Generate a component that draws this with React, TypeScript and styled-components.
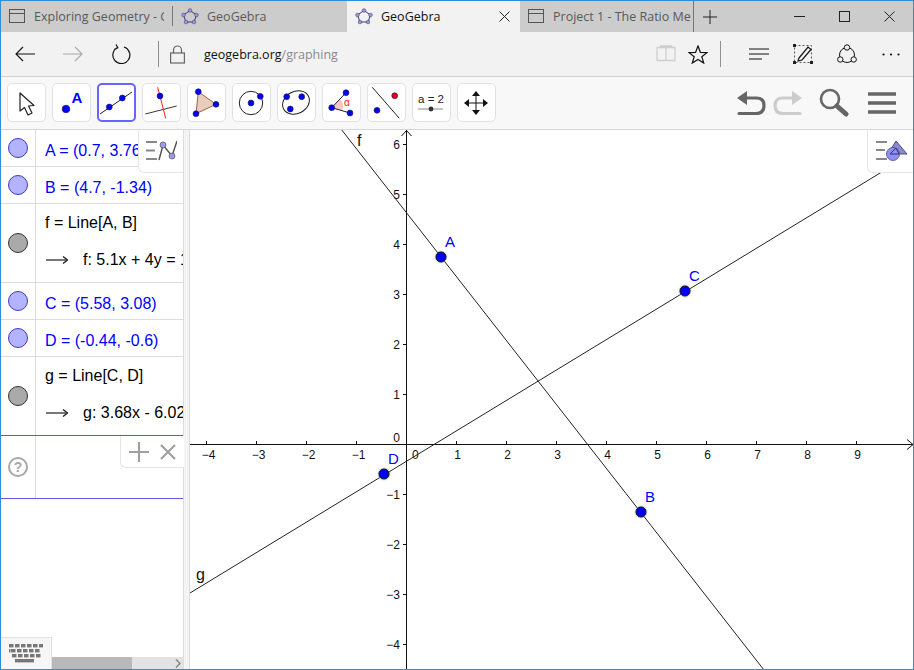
import React from "react";
import styled, { createGlobalStyle } from "styled-components";

const Global = createGlobalStyle`
  html, body { margin: 0; padding: 0; background: #fff; overflow: hidden; }
  * { box-sizing: border-box; }
  svg { flex: none; display: block; }
`;

const Frame = styled.div`
  position: relative;
  width: 914px;
  height: 670px;
  display: flex;
  flex-direction: column;
  border: 1px solid #2b8fdc;
  background: #fff;
  overflow: hidden;
`;

const TabBar = styled.div`
  height: 31px;
  flex: none;
  display: flex;
  background: #cccccc;
  font: 12.5px "Open Sans", "Noto Sans", sans-serif;
`;

const Tab = styled.div<{ $active?: boolean; $w: number; $sep?: "short" | "full" }>`
  position: relative;
  width: ${(p) => p.$w}px;
  flex: none;
  display: flex;
  align-items: center;
  padding-left: 8px;
  gap: 8px;
  color: ${(p) => (p.$active ? "#111" : "#5a5a5a")};
  background: ${(p) => (p.$active ? "#f2f2f2" : "transparent")};
  border-right: ${(p) => (p.$sep === "full" ? "1px solid #777" : "none")};
  &::after {
    content: "";
    display: ${(p) => (p.$sep === "short" ? "block" : "none")};
    position: absolute;
    right: 0;
    top: 5px;
    height: 20px;
    border-right: 1px solid #777;
  }
`;

const TabTitle = styled.span<{ $w: number }>`
  width: ${(p) => p.$w}px;
  overflow: hidden;
  white-space: nowrap;
`;

const TabClose = styled.span`
  margin-left: auto;
  margin-right: 10px;
  display: flex;
`;

const WindowButtons = styled.div`
  margin-left: auto;
  padding-right: 1px;
  display: flex;
  align-items: center;
`;

const WindowButton = styled.div`
  width: 45px;
  height: 31px;
  display: flex;
  align-items: center;
  justify-content: center;
`;

const NewTab = styled.div`
  width: 32px;
  display: flex;
  align-items: center;
  justify-content: center;
`;

const AddressBar = styled.div`
  height: 45px;
  flex: none;
  display: flex;
  align-items: center;
  background: #f2f2f2;
  border-bottom: 1px solid #cfcfcf;
`;

const NavSlot = styled.div<{ $w?: number }>`
  width: ${(p) => p.$w ?? 48}px;
  height: 44px;
  flex: none;
  display: flex;
  align-items: center;
  justify-content: center;
`;

const BarSep = styled.div<{ $ml: number; $mr?: number }>`
  width: 1px;
  height: 26px;
  flex: none;
  background: #8f8f8f;
  margin-left: ${(p) => p.$ml}px;
  margin-right: ${(p) => p.$mr ?? 0}px;
`;

const Url = styled.div`
  margin-left: 9px;
  font: 12.5px "Open Sans", "Noto Sans", sans-serif;
  color: #111;
  span { color: #8a8a8a; }
`;

const RightNav = styled.div`
  margin-left: auto;
  display: flex;
  align-items: center;
`;

const ToolBar = styled.div`
  height: 53px;
  flex: none;
  display: flex;
  align-items: center;
  padding-left: 6px;
  padding-bottom: 1px;
  gap: 6px;
  background: #f8f8f8;
  border-bottom: 1px solid #d6d6d6;
`;

const ToolButton = styled.div<{ $active?: boolean }>`
  width: 39px;
  height: 39px;
  flex: none;
  background: #fff;
  border: ${(p) => (p.$active ? "2px solid #6666ff" : "1px solid #e2e2e2")};
  border-radius: 5px;
  display: flex;
  align-items: center;
  justify-content: center;
  svg { margin: ${(p) => (p.$active ? "-1px" : "0")}; }
`;

const ToolActions = styled.div`
  margin-left: auto;
  margin-right: 17px;
  display: flex;
  align-items: center;
`;

const ActionIcon = styled.div<{ $ml?: number }>`
  margin-left: ${(p) => p.$ml ?? 0}px;
  display: flex;
`;

const Main = styled.div`
  flex: 1;
  min-height: 0;
  display: flex;
`;

const AlgebraPanel = styled.div`
  width: 183px;
  flex: none;
  display: flex;
  flex-direction: column;
  border-right: 1px solid #dcdcdc;
  font: 16px "Liberation Sans", Arial, sans-serif;
`;

const AlgebraList = styled.div`
  flex: 1;
  min-height: 0;
  overflow: hidden;
`;

const Row = styled.div<{ $h: number; $blueBottom?: boolean }>`
  height: ${(p) => p.$h}px;
  display: flex;
  border-bottom: 1px solid ${(p) => (p.$blueBottom ? "#5b5be0" : "#dcdcdc")};
`;

const MarbleCell = styled.div`
  width: 35px;
  flex: none;
  display: flex;
  align-items: center;
  justify-content: center;
  border-right: 1px solid #dcdcdc;
`;

const Marble = styled.div<{ $on?: boolean }>`
  width: 20px;
  height: 20px;
  border-radius: 50%;
  background: ${(p) => (p.$on ? "#b3b3ff" : "#aaaaaa")};
  border: 1px solid ${(p) => (p.$on ? "#3a3ac8" : "#333")};
`;

const Help = styled.div`
  width: 20px;
  height: 20px;
  border-radius: 50%;
  border: 2px solid #a8a8a8;
  color: #a8a8a8;
  font: bold 14px/16px "Liberation Sans", Arial, sans-serif;
  text-align: center;
`;

const RowBody = styled.div`
  flex: 1;
  min-width: 0;
  padding-left: 9px;
  display: flex;
  flex-direction: column;
  justify-content: center;
  overflow: hidden;
  white-space: nowrap;
`;

const PointText = styled.div`
  color: #0000ff;
  line-height: 18px;
  padding-top: 5px;
`;

const Definition = styled.div`
  color: #000;
  line-height: 18px;
  margin-bottom: 19px;
`;

const Output = styled.div`
  display: flex;
  align-items: center;
  gap: 15px;
  color: #000;
  line-height: 18px;
  padding-left: 1px;
  margin-bottom: 4px;
`;

const ScrollRow = styled.div`
  height: 12px;
  flex: none;
  margin-left: 50px;
  display: flex;
  align-items: center;
  background: #e3e3e3;
`;

const ScrollThumb = styled.div`
  width: 81px;
  height: 12px;
  background: #b9b9b9;
`;

const ScrollChevron = styled.div`
  margin-left: auto;
  margin-right: 2px;
  display: flex;
`;

const Divider = styled.div`
  width: 6px;
  flex: none;
  background: #f4f4f4;
  border-right: 1px solid #dcdcdc;
`;

const GraphView = styled.div`
  flex: 1;
  min-width: 0;
`;

const Corner = styled.div<{ $w: number; $h: number }>`
  position: absolute;
  width: ${(p) => p.$w}px;
  height: ${(p) => p.$h}px;
  background: #fff;
  border: 1px solid #e6e6e6;
  border-top: none;
  border-right: none;
  border-bottom-left-radius: 6px;
  display: flex;
  align-items: center;
  justify-content: center;
`;

const AlgebraStyle = styled(Corner)`
  left: 137px;
  top: 129px;
`;

const GraphStyle = styled(Corner)`
  right: 0;
  top: 129px;
`;

const InputActions = styled(Corner)`
  left: 119px;
  top: 435px;
  gap: 11px;
`;

const KeyboardButton = styled.div`
  position: absolute;
  left: 0;
  bottom: 0;
  width: 51px;
  height: 32px;
  background: #f6f6f6;
  border: 1px solid #e2e2e2;
  border-left: none;
  border-bottom: none;
  display: flex;
  align-items: center;
  justify-content: center;
`;

const Pt = ({ x, y, r = 2.9, c = "#0000ff" }: { x: number; y: number; r?: number; c?: string }) => (
  <circle cx={x} cy={y} r={r} fill={c} stroke="#1a1a60" strokeWidth={0.7} />
);

const Ic = ({ children }: { children: React.ReactNode }) => (
  <svg width={37} height={37} viewBox="1 1 37 37">{children}</svg>
);

const tools: React.ReactNode[] = [
  <Ic><path d="M13 10 V28 L17.5 24.5 L21 32 L25 30 L21.5 23 L27 22.5 Z" fill="#fff" stroke="#222" strokeWidth="1.2" strokeLinejoin="round" /></Ic>,
  <Ic><Pt x={14} y={26} r={3.8} /><text x={19.5} y={20} fontFamily="Liberation Sans" fontWeight="bold" fontSize="15" fill="#0000ff">A</text></Ic>,
  <Ic><line x1={3} y1={31} x2={35} y2={9} stroke="#222" strokeWidth="1" /><Pt x={12.3} y={24} /><Pt x={25.3} y={15} /></Ic>,
  <Ic><line x1={3.3} y1={31} x2={34.7} y2={23} stroke="#433" strokeWidth="1" /><line x1={15.7} y1={4.3} x2={23.7} y2={35.3} stroke="#f02020" strokeWidth="1" /><Pt x={18} y={13} /></Ic>,
  <Ic><polygon points="11.3,8.7 29,21.3 9,30.7" fill="#e8cdbd" stroke="#a0603c" strokeWidth="1" /><Pt x={11.3} y={8.7} /><Pt x={29} y={21.3} /><Pt x={9} y={30.7} /></Ic>,
  <Ic><circle cx={19} cy={20} r={11.7} fill="none" stroke="#222" strokeWidth="1" /><Pt x={19} y={20} /><Pt x={28.3} y={13.3} /></Ic>,
  <Ic><ellipse cx={19} cy={19.5} rx={14} ry={11} transform="rotate(-28 19 19.5)" fill="none" stroke="#222" strokeWidth="1" /><Pt x={9.7} y={13.7} /><Pt x={24.7} y={13.7} /><Pt x={13.3} y={26} /></Ic>,
  <Ic><path d="M9.7 24.7 L18 16 A11 11 0 0 1 20.5 27.5 Z" fill="#f8c8c8" /><path d="M24 9.7 L9.7 24.7 L28 30" fill="none" stroke="#222" strokeWidth="1" /><Pt x={9.7} y={24.7} /><Pt x={24} y={9.7} /><Pt x={28} y={30} /><text x={22} y={23} fontFamily="Liberation Sans" fontSize="10" fill="#f02020">α</text></Ic>,
  <Ic><line x1={5.3} y1={4.3} x2={32.3} y2={35.3} stroke="#222" strokeWidth="1" /><Pt x={27.7} y={12.7} c="#f00000" /><Pt x={10} y={27.3} /></Ic>,
  <Ic><text x={19} y={20} textAnchor="middle" fontFamily="Liberation Sans" fontSize="11.5" fill="#222">a = 2</text><line x1={6} y1={26} x2={31} y2={26} stroke="#888" strokeWidth="1" /><circle cx={19} cy={26} r={2.4} fill="#333" /></Ic>,
  <Ic>
    <path d="M19 10 V30 M9 20 H29" stroke="#111" strokeWidth="1" />
    <path d="M19 8 L23 13 H15 Z M19 32 L15 27 H23 Z M7 20 L12 16 V24 Z M31 20 L26 16 V24 Z" fill="#111" />
  </Ic>,
];

const S = ({ w, h, children }: { w: number; h: number; children: React.ReactNode }) => (
  <svg width={w} height={h} viewBox={`0 0 ${w} ${h}`} fill="none">{children}</svg>
);

const PageIcon = () => (
  <S w={17} h={15}><rect x=".5" y=".5" width="15" height="13" stroke="#555" /><line x1="1" y1="4.5" x2="15" y2="4.5" stroke="#555" /></S>
);

const GeoIcon = () => (
  <S w={18} h={17}>
    <polygon points="9,2.5 15.5,7 13,14 5,14 2.5,7" stroke="#3a3a5a" strokeWidth="1" />
    {[[9, 2.5], [15.5, 7], [13, 14], [5, 14], [2.5, 7]].map(([x, y]) => (
      <circle key={x} cx={x} cy={y} r="1.8" fill="#9a9ae8" stroke="#44447a" strokeWidth=".6" />
    ))}
  </S>
);

const Cross = ({ s = 11, c = "#222" }: { s?: number; c?: string }) => (
  <S w={s} h={s}><path d={`M.5 .5 L${s - 0.5} ${s - 0.5} M${s - 0.5} .5 L.5 ${s - 0.5}`} stroke={c} /></S>
);

const ResultArrow = () => (
  <S w={22} h={10}><path d="M0 5 H20" stroke="#555" strokeWidth="1.6" /><path d="M17 1.5 L21.5 5 L17 8.5" stroke="#222" strokeWidth="1.4" /></S>
);

const X0 = 406.5;
const Y0 = 444.5;
const U = 50;
const xs = [-4, -3, -2, -1, 1, 2, 3, 4, 5, 6, 7, 8, 9];
const ys = [-4, -3, -2, -1, 1, 2, 3, 4, 5, 6];

const points = [
  { n: "A", x: 441, y: 257, lx: 445, ly: 247 },
  { n: "B", x: 641, y: 512, lx: 645, ly: 502 },
  { n: "C", x: 685, y: 291, lx: 689, ly: 281 },
  { n: "D", x: 384, y: 474, lx: 388, ly: 464 },
];

const Graph = () => (
  <svg width={723} height={539} viewBox="190 130 723 539">
    <g fontFamily="Liberation Sans" fontSize="12" fill="#111">
      <path d={`M${X0} 130 V669 M190 ${Y0} H913`} stroke="#111" strokeWidth="1" />
      <path d={`M401.5 136 L${X0} 130.5 L411.5 136 M907 439.5 L913 ${Y0} L907 449.5`} stroke="#111" fill="none" />
      {xs.map((v) => (
        <g key={v}>
          <line x1={X0 + v * U} x2={X0 + v * U} y1={Y0 - 3.5} y2={Y0} stroke="#111" />
          <text x={X0 + v * U + (v < 0 ? 2 : 1)} y={459} textAnchor="middle">{v < 0 ? `−${-v}` : v}</text>
        </g>
      ))}
      {ys.map((v) => (
        <g key={v}>
          <line x1={X0 - 3.5} x2={X0} y1={Y0 - v * U} y2={Y0 - v * U} stroke="#111" />
          <text x={400} y={Y0 - v * U + 4} textAnchor="end">{v < 0 ? `−${-v}` : v}</text>
        </g>
      ))}
      <text x={400} y={442} textAnchor="end">0</text>
      <text x={412} y={459}>0</text>
    </g>
    <line x1={341} y1={129} x2={764} y2={670} stroke="#222" strokeWidth="1" />
    <line x1={190} y1={593} x2={913} y2={153} stroke="#222" strokeWidth="1" />
    <g fontFamily="Liberation Sans" fontSize="16" fill="#111">
      <text x={357} y={146}>f</text>
      <text x={196} y={580}>g</text>
    </g>
    {points.map((p) => (
      <g key={p.n}>
        <circle cx={p.x} cy={p.y} r={6.5} fill="#999" fillOpacity=".35" />
        <circle cx={p.x} cy={p.y} r={5} fill="#0000ff" stroke="#111" strokeWidth="1" />
        <text x={p.lx} y={p.ly} fontFamily="Liberation Sans" fontSize="15" fill="#0000ff">{p.n}</text>
      </g>
    ))}
  </svg>
);

const rows: { h: number; text?: string; def?: string; out?: string; blue?: boolean }[] = [
  { h: 37, text: "A = (0.7, 3.76)" },
  { h: 37, text: "B = (4.7, -1.34)" },
  { h: 79, def: "f = Line[A, B]", out: "f: 5.1x + 4y = 18.61" },
  { h: 37, text: "C = (5.58, 3.08)" },
  { h: 37, text: "D = (-0.44, -0.6)" },
  { h: 79, def: "g = Line[C, D]", out: "g: 3.68x - 6.02y = 2", blue: true },
];

export default function App() {
  return (
    <>
      <Global />
      <Frame>
        <TabBar>
          <Tab $w={172} $sep="short"><PageIcon /><TabTitle $w={130}>Exploring Geometry - G</TabTitle></Tab>
          <Tab $w={174}><GeoIcon /><TabTitle $w={120}>GeoGebra</TabTitle></Tab>
          <Tab $w={173} $active>
            <GeoIcon /><TabTitle $w={110}>GeoGebra</TabTitle>
            <TabClose><Cross /></TabClose>
          </Tab>
          <Tab $w={174} $sep="full"><PageIcon /><TabTitle $w={138}>Project 1 - The Ratio Method</TabTitle></Tab>
          <NewTab><S w={14} h={14}><path d="M7 0 V14 M0 7 H14" stroke="#222" /></S></NewTab>
          <WindowButtons>
            <WindowButton><S w={11} h={11}><path d="M0 5.5 H11" stroke="#222" /></S></WindowButton>
            <WindowButton><S w={11} h={11}><rect x=".5" y=".5" width="10" height="10" stroke="#222" /></S></WindowButton>
            <WindowButton><Cross /></WindowButton>
          </WindowButtons>
        </TabBar>

        <AddressBar>
          <NavSlot>
            <S w={20} h={16}><path d="M20 8 H1 M8 1 L1 8 L8 15" stroke="#111" strokeWidth="1.1" /></S>
          </NavSlot>
          <NavSlot>
            <S w={20} h={16}><path d="M0 8 H19 M12 1 L19 8 L12 15" stroke="#a8a8a8" strokeWidth="1.1" /></S>
          </NavSlot>
          <NavSlot>
            <S w={20} h={20}><path d="M6.5 3.5 A8.5 8.5 0 1 0 13 3 M5 .5 L6.8 3.7 L3.2 5.6" stroke="#111" strokeWidth="1.2" /></S>
          </NavSlot>
          <BarSep $ml={13} />
          <NavSlot $w={36}>
            <S w={15} h={19}><rect x=".6" y="8" width="13.8" height="10" stroke="#666" strokeWidth="1.2" /><path d="M3.5 8 V5 A4 4 0 0 1 11.5 5 V8" stroke="#666" strokeWidth="1.2" /></S>
          </NavSlot>
          <Url>geogebra.org<span>/graphing</span></Url>
          <RightNav>
            <NavSlot $w={32}>
              <S w={20} h={18}><path d="M10 2.5 H1 V15.5 H10 Z M10 2.5 H19 V15.5 H10 M4 1 H10 M10 1 H16" stroke="#cfcfcf" strokeWidth="1.3" /></S>
            </NavSlot>
            <NavSlot $w={32}>
              <S w={20} h={19}><polygon points="10,1 12.4,7.3 19,7.6 13.8,11.7 15.7,18 10,14.4 4.3,18 6.2,11.7 1,7.6 7.6,7.3" stroke="#111" strokeWidth="1.2" /></S>
            </NavSlot>
            <BarSep $ml={6} $mr={16} />
            <NavSlot $w={44}>
              <S w={20} h={14}><path d="M0 2 H20 M0 7 H20 M0 12 H13" stroke="#111" strokeWidth="1.1" /></S>
            </NavSlot>
            <NavSlot $w={44}>
              <S w={20} h={20}>
                <rect x="1.5" y="1.5" width="17" height="17" stroke="#555" strokeDasharray="2 2" />
                <path d="M6 14 L15 3 L18 5.5 L9 16 L5 17 Z" fill="#f2f2f2" stroke="#111" strokeWidth="1.2" />
                <rect x="0" y="0" width="3" height="3" fill="#222" /><rect x="0" y="17" width="3" height="3" fill="#222" /><rect x="17" y="17" width="3" height="3" fill="#222" />
              </S>
            </NavSlot>
            <NavSlot $w={44}>
              <S w={20} h={20}>
                <circle cx="10" cy="11" r="7.5" stroke="#111" />
                <circle cx="10" cy="3.5" r="2.7" fill="#f2f2f2" stroke="#111" />
                <circle cx="3.3" cy="15.5" r="2.7" fill="#f2f2f2" stroke="#111" />
                <circle cx="16.7" cy="15.5" r="2.7" fill="#f2f2f2" stroke="#111" />
              </S>
            </NavSlot>
            <NavSlot $w={44}>
              <S w={18} h={3}><circle cx="1.5" cy="1.5" r="1.1" fill="#111" /><circle cx="9" cy="1.5" r="1.1" fill="#111" /><circle cx="16.5" cy="1.5" r="1.1" fill="#111" /></S>
            </NavSlot>
          </RightNav>
        </AddressBar>

        <ToolBar>
          {tools.map((t, i) => (
            <ToolButton key={i} $active={i === 2}>{t}</ToolButton>
          ))}
          <ToolActions>
            <ActionIcon>
              <S w={30} h={26}>
                <path d="M1 8 L11 1 V15 Z" fill="#666" />
                <path d="M9 8 H20 Q28 8 28 15.5 Q28 23.5 20 23.5 H3" stroke="#666" strokeWidth="3.2" strokeLinecap="round" />
              </S>
            </ActionIcon>
            <ActionIcon $ml={7}>
              <S w={30} h={26}>
                <path d="M29 8 L19 1 V15 Z" fill="#ccc" />
                <path d="M21 8 H10 Q2 8 2 15.5 Q2 23.5 10 23.5 H27" stroke="#ccc" strokeWidth="3.2" strokeLinecap="round" />
              </S>
            </ActionIcon>
            <ActionIcon $ml={16}>
              <S w={30} h={30}>
                <circle cx="11" cy="11" r="9" stroke="#666" strokeWidth="2.6" />
                <path d="M18 18 L27 26" stroke="#666" strokeWidth="5" strokeLinecap="round" />
              </S>
            </ActionIcon>
            <ActionIcon $ml={19}>
              <S w={28} h={24}><path d="M0 3 H28 M0 12 H28 M0 21 H28" stroke="#666" strokeWidth="3.6" /></S>
            </ActionIcon>
          </ToolActions>
        </ToolBar>

        <Main>
          <AlgebraPanel>
            <AlgebraList>
              {rows.map((r) => (
                <Row key={r.text ?? r.def} $h={r.h} $blueBottom={r.blue}>
                  <MarbleCell><Marble $on={!!r.text} /></MarbleCell>
                  <RowBody>
                    {r.text ? (
                      <PointText>{r.text}</PointText>
                    ) : (
                      <>
                        <Definition>{r.def}</Definition>
                        <Output><ResultArrow />{r.out}</Output>
                      </>
                    )}
                  </RowBody>
                </Row>
              ))}
              <Row $h={63} $blueBottom>
                <MarbleCell><Help>?</Help></MarbleCell>
              </Row>
            </AlgebraList>
            <ScrollRow>
              <ScrollThumb />
              <ScrollChevron>
                <S w={6} h={9}><path d="M1 .5 L5 4.5 L1 8.5" stroke="#888" strokeWidth="1.5" /></S>
              </ScrollChevron>
            </ScrollRow>
          </AlgebraPanel>
          <Divider />
          <GraphView><Graph /></GraphView>
        </Main>

        <AlgebraStyle $w={45} $h={43}>
          <S w={32} h={24}>
            <path d="M1 3 H12 M1 11.5 H10 M1 20 H12" stroke="#888" strokeWidth="2.2" />
            <path d="M14 21 L18 6 L27 17 L32 2" stroke="#555" strokeWidth="1.5" />
            <circle cx="18" cy="6" r="3" fill="#9a9ae8" stroke="#555" strokeWidth=".7" />
            <circle cx="27" cy="17" r="3" fill="#9a9ae8" stroke="#555" strokeWidth=".7" />
          </S>
        </AlgebraStyle>

        <GraphStyle $w={46} $h={43}>
          <S w={32} h={24}>
            <path d="M1 3 H12 M1 11 H10 M1 20 H12" stroke="#888" strokeWidth="2.2" />
            <polygon points="21,2 32,15 13,15" fill="#8a8ad0" stroke="#4a4a8a" strokeWidth="1" />
            <circle cx="18" cy="15" r="6.5" fill="#8f8ff5" stroke="#4a4a8a" strokeWidth=".8" />
            <polygon points="21,9 24,15 15,15" fill="none" stroke="#33336a" strokeWidth="1" />
          </S>
        </GraphStyle>

        <InputActions $w={64} $h={32}>
          <S w={20} h={20}><path d="M10 0 V20 M0 10 H20" stroke="#a0a0a0" strokeWidth="2.2" /></S>
          <S w={16} h={16}><path d="M1 1 L15 15 M15 1 L1 15" stroke="#a0a0a0" strokeWidth="2.2" /></S>
        </InputActions>

        <KeyboardButton>
          <S w={34} h={19}>
            <g fill="#777">
              {[0, 6, 12, 18, 24, 30].map((x) => <rect key={x} x={x} y="0" width="4.5" height="3.4" />)}
              {[2, 8, 14, 20, 26].map((x) => <rect key={x} x={x} y="5" width="4.5" height="3.4" />)}
              <rect x="0" y="5" width="1.5" height="3.4" />
              {[3, 9, 15, 21, 27].map((x) => <rect key={x} x={x} y="10" width="4.5" height="3.4" />)}
              <rect x="6" y="15" width="19" height="3.4" />
            </g>
          </S>
        </KeyboardButton>
      </Frame>
    </>
  );
}
